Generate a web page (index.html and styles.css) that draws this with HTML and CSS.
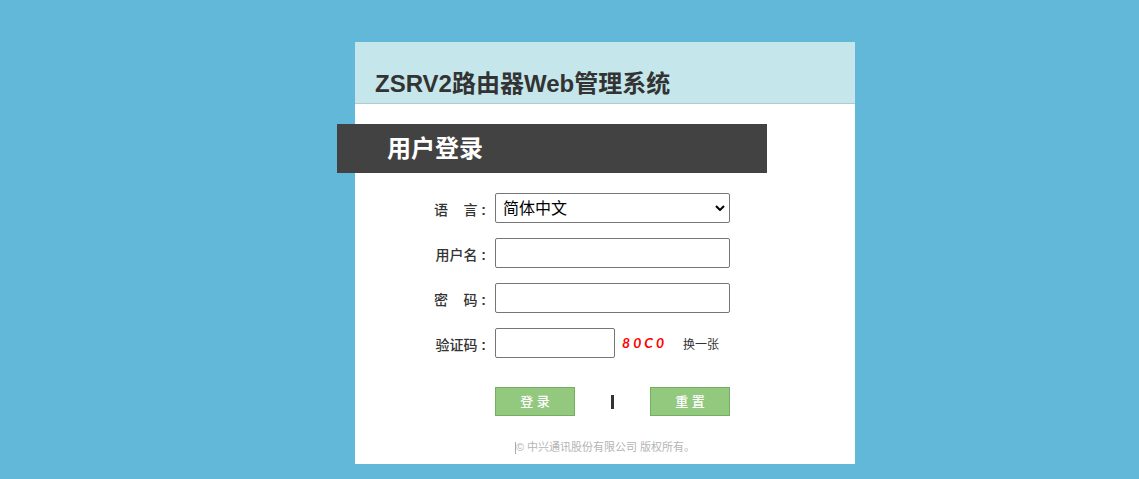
FILE: index.html
```html
<!DOCTYPE html>
<html lang="zh-CN">
<head>
<meta charset="utf-8">
<meta name="viewport" content="width=device-width, initial-scale=1">
<title>ZSRV2路由器Web管理系统</title>
<link rel="stylesheet" href="styles.css">
</head>
<body>
<main class="login-card">
  <header class="card-header">
    <h1 class="title">ZSRV2路由器Web管理系统</h1>
  </header>
  <h2 class="banner">用户登录</h2>
  <form class="login-form">
    <div class="row">
      <label class="label" for="language">语&nbsp;&nbsp;&nbsp;&nbsp;言<span class="colon"> :</span></label>
      <div class="select-wrap">
        <select class="field" id="language">
          <option>简体中文</option>
          <option>English</option>
        </select>
        <svg class="chevron" viewBox="0 0 10 6" aria-hidden="true"><path d="M1 1l4 4 4-4" fill="none" stroke="#000" stroke-width="2"/></svg>
      </div>
    </div>
    <div class="row">
      <label class="label" for="username">用户名<span class="colon"> :</span></label>
      <input class="field" id="username" type="text">
    </div>
    <div class="row">
      <label class="label" for="password">密&nbsp;&nbsp;&nbsp;&nbsp;码<span class="colon"> :</span></label>
      <input class="field" id="password" type="password">
    </div>
    <div class="row">
      <label class="label" for="captcha">验证码<span class="colon"> :</span></label>
      <div class="captcha">
        <input class="field captcha-field" id="captcha" type="text">
        <span class="code">8 0 C 0</span>
        <a class="refresh" href="#">换一张</a>
      </div>
    </div>
    <div class="actions">
      <button class="button" type="submit">登 录</button>
      <span class="divider"></span>
      <button class="button" type="reset">重 置</button>
    </div>
  </form>
  <footer class="footer"><span class="caret"></span>© 中兴通讯股份有限公司 版权所有。</footer>
</main>
</body>
</html>
```

FILE: styles.css
```css
* {
  box-sizing: border-box;
}

body {
  margin: 0;
  padding: 42px 0 15px 71px;
  background: #62b8d8;
  color: #333;
  font-family: "Liberation Sans", "Noto Sans CJK SC", sans-serif;
  font-size: 14px;
}

.login-card {
  width: 100%;
  max-width: 500px;
  margin: 0 auto;
  padding-bottom: 7px;
  background: #fff;
}

.card-header {
  padding: 24px 20px 1px;
  border-bottom: 1px solid #b0cccc;
  background: #c5e7eb;
}

.title,
.banner {
  margin: 0;
  font-size: 24px;
  font-weight: bold;
  line-height: 36px;
}

.banner {
  max-width: 430px;
  margin: 20px 0 20px -18px;
  padding: 7px 50px 6px;
  background: #424242;
  color: #fff;
}

.login-form {
  display: grid;
  gap: 15px;
  width: 375px;
}

.row {
  display: grid;
  grid-template-columns: 131px 1fr;
  column-gap: 9px;
  align-items: center;
}

.label {
  padding-top: 4px;
  font-weight: 500;
  line-height: 20px;
  text-align: right;
  white-space: nowrap;
}

.colon {
  font-weight: bold;
}

.field {
  display: block;
  width: 100%;
  height: 30px;
  padding: 0 7px;
  border: 1px solid #767676;
  border-radius: 2px;
  background: #fff;
  color: #000;
  font: 16px/28px "Liberation Sans", "Noto Sans CJK SC", sans-serif;
}

.select-wrap {
  position: relative;
}

select.field {
  padding-top: 1px;
  appearance: none;
}

.chevron {
  position: absolute;
  top: 12px;
  right: 5px;
  width: 10px;
  height: 6px;
  pointer-events: none;
}

.captcha {
  display: flex;
  align-items: center;
}

.captcha-field {
  width: 120px;
}

.code {
  width: 60px;
  margin: 0 1px 0 7px;
  color: #f00;
  font: italic bold 14px/20px Lato, sans-serif;
}

.refresh {
  color: #333;
  font-size: 12px;
  text-decoration: none;
}

.actions {
  display: flex;
  align-items: center;
  justify-content: space-between;
  margin: 14px 0 0 140px;
}

.button {
  width: 80px;
  height: 29px;
  padding: 0;
  border: 1px solid #76ae5f;
  background: #93c97f;
  color: #fff;
  font: 500 13px/20px "Liberation Sans", "Noto Sans CJK SC", sans-serif;
}

.divider {
  width: 3px;
  height: 14px;
  background: #333;
}

.footer {
  display: flex;
  align-items: center;
  justify-content: center;
  margin-top: 22px;
  color: #b5b5b5;
  font-size: 11px;
  line-height: 19px;
}

.caret {
  width: 1px;
  height: 12px;
  background: #aaa;
}
```
